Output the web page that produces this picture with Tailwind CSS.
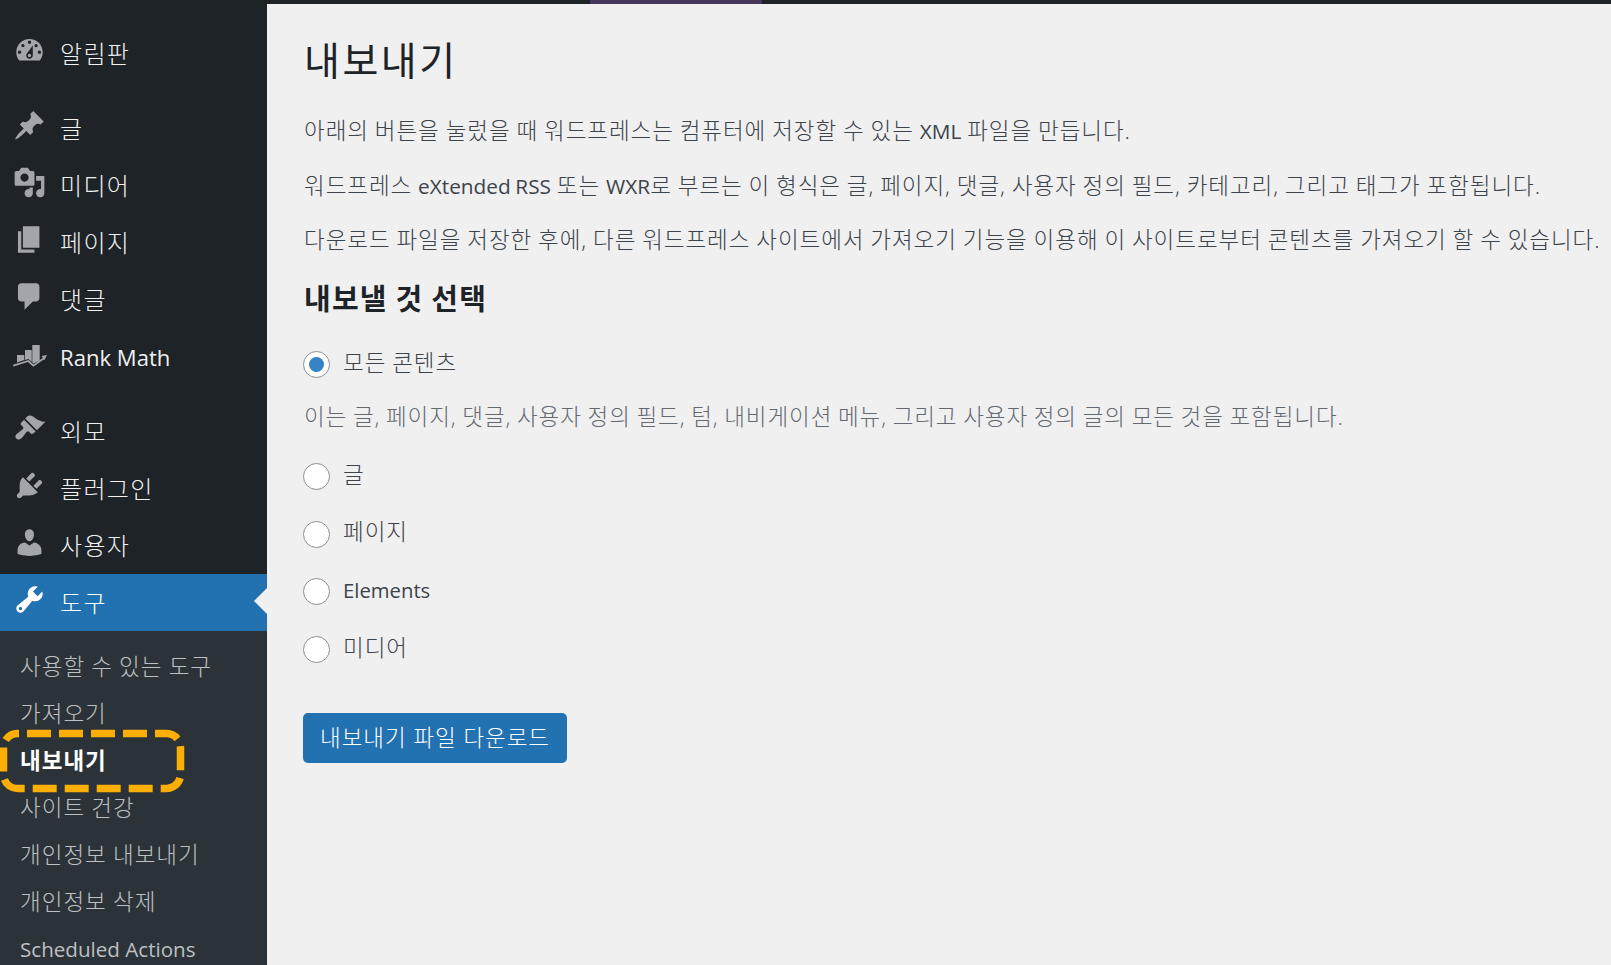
<!DOCTYPE html>
<html lang="ko">
<head>
<meta charset="UTF-8">
<title>내보내기</title>
<script src="https://cdn.jsdelivr.net/npm/@tailwindcss/browser@4"></script>
</head>
<body class="h-screen overflow-hidden bg-[#f0f0f1] font-['Open_Sans','Noto_Sans_CJK_KR',sans-serif] text-[#3c434a]">
<div class="relative flex h-full flex-col">
	<!-- top bar -->
	<div class="flex h-[4px] shrink-0 bg-[#1d2327]">
		<div class="w-[590px]"></div>
		<div class="w-[172px] bg-[#46385a]"></div>
	</div>
	<div class="flex min-h-0 flex-1">
		<!-- sidebar -->
		<aside class="flex w-[267px] shrink-0 flex-col bg-[#1d2327] pt-[21px] text-[24px] font-light tracking-[1.3px] text-[#f0f0f1]">
			<a class="flex h-[57px] shrink-0 items-center">
				<svg class="ml-[13px] h-[33px] w-[33px] -translate-y-[3px] fill-[#a2a6aa]" viewBox="0 0 20 20"><path d="M3.76 16h12.48c1.1-1.37 1.76-3.11 1.76-5 0-4.42-3.58-8-8-8s-8 3.58-8 8c0 1.89.66 3.63 1.76 5zM10 4c.55 0 1 .45 1 1s-.45 1-1 1-1-.45-1-1 .45-1 1-1zM6 6c.55 0 1 .45 1 1s-.45 1-1 1-1-.45-1-1 .45-1 1-1zm8 0c.55 0 1 .45 1 1s-.45 1-1 1-1-.45-1-1 .45-1 1-1zm-5.37 5.55L12 7v6c0 1.1-.9 2-2 2s-2-.9-2-2c0-.57.24-1.08.63-1.45zM4 10c.55 0 1 .45 1 1s-.45 1-1 1-1-.45-1-1 .45-1 1-1zm12 0c.55 0 1 .45 1 1s-.45 1-1 1-1-.45-1-1 .45-1 1-1zm-5 3c0-.55-.45-1-1-1s-1 .45-1 1 .45 1 1 1 1-.45 1-1z" fill-rule="evenodd"/></svg>
				<span class="ml-[14px]">알림판</span>
			</a>
			<a class="mt-[18px] flex h-[57px] shrink-0 items-center">
				<svg class="ml-[13px] h-[33px] w-[33px] -translate-y-[3px] fill-[#a2a6aa]" viewBox="0 0 20 20"><path d="M10.44 3.02l1.82-1.82 6.36 6.35-1.83 1.82c-1.05-.68-2.48-.57-3.41.36l-.75.75c-.92.93-1.04 2.35-.35 3.41l-1.83 1.82-2.41-2.41-2.8 2.79c-.42.42-3.38 2.71-3.8 2.29s1.86-3.39 2.28-3.81l2.79-2.79L4.1 9.36l1.83-1.82c1.05.69 2.48.57 3.4-.36l.75-.75c.93-.92 1.05-2.35.36-3.41z"/></svg>
				<span class="ml-[14px]">글</span>
			</a>
			<a class="flex h-[57px] shrink-0 items-center">
				<svg class="ml-[13px] h-[33px] w-[33px] -translate-y-[3px] fill-[#a2a6aa]" viewBox="0 0 20 20"><path d="M13 11V4c0-.55-.45-1-1-1h-1.67L9 1H5L3.67 3H2c-.55 0-1 .45-1 1v7c0 .55.45 1 1 1h10c.55 0 1-.45 1-1zM7 4.5c1.38 0 2.5 1.12 2.5 2.5S8.38 9.5 7 9.5 4.5 8.38 4.5 7 5.62 4.5 7 4.5zM14 6h5v10.5c0 1.38-1.12 2.5-2.5 2.5S14 17.88 14 16.5s1.12-2.5 2.5-2.5c.17 0 .34.02.5.05V9h-3V6zm-4 8.05V13h2v3.5c0 1.38-1.12 2.5-2.5 2.5S7 17.88 7 16.5 8.12 14 9.5 14c.17 0 .34.02.5.05z" fill-rule="evenodd"/></svg>
				<span class="ml-[14px]">미디어</span>
			</a>
			<a class="flex h-[57px] shrink-0 items-center">
				<svg class="ml-[13px] h-[33px] w-[33px] -translate-y-[3px] fill-[#a2a6aa]" viewBox="0 0 20 20"><path d="M6 15V2h10v13H6zm-1 1h8v2H3V5h2v11z"/></svg>
				<span class="ml-[14px]">페이지</span>
			</a>
			<a class="flex h-[57px] shrink-0 items-center">
				<svg class="ml-[13px] h-[33px] w-[33px] -translate-y-[3px] fill-[#a2a6aa]" viewBox="0 0 20 20"><path d="M5 2h9c1.1 0 2 .9 2 2v7c0 1.1-.9 2-2 2h-2l-5 5v-5H5c-1.1 0-2-.9-2-2V4c0-1.1.9-2 2-2z"/></svg>
				<span class="ml-[14px]">댓글</span>
			</a>
			<a class="flex h-[57px] shrink-0 items-center">
				<svg class="ml-[13px] h-[33px] w-[33px] overflow-visible fill-[#a2a6aa]" viewBox="0 0 33 33"><path d="M4 15h7.300v5l-7.300 2.500zM12 10h6.700v12l-3.400-3-3.300 1zM19.300 5h7.400v15.500l-6.400 3-1-.9z"/><path d="M.3 25.700l15-4.700 5 4.700 11.400-8" fill="none" stroke="#a2a6aa" stroke-width="1.800"/><path d="M34 15l-5.500 1 3 4z"/></svg>
				<span class="ml-[14px] translate-y-px text-[22.1px] font-normal tracking-normal">Rank Math</span>
			</a>
			<a class="mt-[18px] flex h-[57px] shrink-0 items-center">
				<svg class="ml-[13px] h-[33px] w-[33px] -translate-y-[3px] fill-[#a2a6aa]" viewBox="0 0 20 20"><path d="M14.48 11.06L7.41 3.99l1.5-1.5c.5-.56 2.3-.47 3.51.32 1.21.8 1.43 1.28 2.91 2.1 1.18.64 2.45 1.26 4.45.85zm-.71.71L6.7 4.7 4.93 6.47c-.39.39-.39 1.02 0 1.41l1.06 1.06c.39.39.39 1.03 0 1.42-.6.6-1.43 1.11-2.21 1.69-.35.26-.7.53-1.01.84C1.43 13.71.96 15.12 1.97 16.13c.99 1 2.4.53 3.8-.86.31-.31.58-.66.84-1.02.57-.78 1.08-1.61 1.69-2.21.39-.39 1.02-.39 1.41 0l1.06 1.06c.39.39 1.02.39 1.41 0z"/></svg>
				<span class="ml-[14px]">외모</span>
			</a>
			<a class="flex h-[57px] shrink-0 items-center">
				<svg class="ml-[13px] h-[33px] w-[33px] -translate-y-[3px] fill-[#a2a6aa]" viewBox="0 0 20 20"><path d="M13.11 4.36L9.87 7.6 8 5.73l3.24-3.24c.35-.34 1.05-.2 1.56.32.52.51.66 1.21.31 1.55zm-8 1.77l.91-1.12 9.01 9.01-1.19.84c-.71.71-2.63 1.16-3.82 1.16H6.14L4.9 17.26c-.59.59-1.54.59-2.12 0-.59-.58-.59-1.53 0-2.12l1.24-1.24v-3.88c0-1.13.4-3.19 1.09-3.89zm7.26 3.97l3.24-3.24c.34-.35 1.04-.21 1.55.31.52.51.66 1.21.31 1.55l-3.24 3.25z"/></svg>
				<span class="ml-[14px]">플러그인</span>
			</a>
			<a class="flex h-[57px] shrink-0 items-center">
				<svg class="ml-[13px] h-[33px] w-[33px] -translate-y-[3px] fill-[#a2a6aa]" viewBox="0 0 20 20"><path d="M10 9.25c-2.27 0-2.73-3.44-2.73-3.44C7 4.02 7.82 2 9.97 2c2.16 0 2.98 2.02 2.71 3.81 0 0-.41 3.44-2.68 3.44zm0 2.57L12.72 10c2.39 0 4.52 2.33 4.52 4.53v2.49s-3.65 1.13-7.24 1.13c-3.65 0-7.24-1.13-7.24-1.13v-2.49c0-2.25 1.94-4.48 4.47-4.48z"/></svg>
				<span class="ml-[14px]">사용자</span>
			</a>
			<a class="relative flex h-[57px] shrink-0 items-center bg-[#2271b1] text-white">
				<svg class="ml-[13px] h-[33px] w-[33px] -translate-y-[3px] fill-white" viewBox="0 0 20 20"><path d="M16.68 9.77c-1.34 1.34-3.3 1.67-4.95.99l-5.41 6.52c-.99.99-2.59.99-3.58 0s-.99-2.59 0-3.57l6.52-5.42c-.68-1.65-.35-3.61.99-4.95 1.28-1.28 3.12-1.62 4.72-1.06l-2.89 2.89 2.82 2.82 2.86-2.87c.53 1.58.18 3.39-1.08 4.65zM3.81 16.21c.4.39 1.04.39 1.43 0 .4-.4.4-1.04 0-1.43-.39-.4-1.03-.4-1.43 0-.39.39-.39 1.03 0 1.43z" fill-rule="evenodd"/></svg>
				<span class="ml-[14px]">도구</span>
				<span class="absolute right-0 top-[14px] h-0 w-0 border-y-[13px] border-r-[13px] border-y-transparent border-r-[#f0f0f1]"></span>
			</a>
			<ul class="flex-1 bg-[#2c3338] pt-[12px] text-[22.5px] tracking-[1px] text-[#bcc0c4] [word-spacing:-0.7px]">
				<li class="flex h-[47px] shrink-0 items-center pl-[20px]">사용할 수 있는 도구</li>
				<li class="flex h-[47px] shrink-0 items-center pl-[20px]">가져오기</li>
				<li class="flex h-[47px] shrink-0 items-center pl-[20px] font-semibold text-white">내보내기</li>
				<li class="flex h-[47px] shrink-0 items-center pl-[20px]">사이트 건강</li>
				<li class="flex h-[47px] shrink-0 items-center pl-[20px]">개인정보 내보내기</li>
				<li class="flex h-[47px] shrink-0 items-center pl-[20px]">개인정보 삭제</li>
				<li class="flex h-[47px] shrink-0 translate-y-px items-center pl-[20px] text-[20.6px] font-normal tracking-normal [word-spacing:0]">Scheduled Actions</li>
			</ul>
		</aside>
		<!-- content -->
		<main class="min-w-0 flex-1 whitespace-nowrap pl-[37px] text-[22.5px] font-light tracking-[0.93px] [word-spacing:-0.85px]">
			<h1 class="mt-[32px] text-[39px] font-normal leading-[48px] tracking-[2.5px] text-[#1d2327]">내보내기</h1>
			<p class="mt-[29px] leading-[36px]">아래의 버튼을 눌렀을 때 워드프레스는 컴퓨터에 저장할 수 있는 <span class="text-[20.8px] font-normal tracking-normal">XML</span> 파일을 만듭니다.</p>
			<p class="mt-[19px] leading-[36px]">워드프레스 <span class="text-[20.8px] font-normal tracking-normal">eXtended RSS</span> 또는 <span class="text-[20.8px] font-normal tracking-normal">WXR</span>로 부르는 이 형식은 글, 페이지, 댓글, 사용자 정의 필드, 카테고리, 그리고 태그가 포함됩니다.</p>
			<p class="mt-[18px] leading-[36px]">다운로드 파일을 저장한 후에, 다른 워드프레스 사이트에서 가져오기 기능을 이용해 이 사이트로부터 콘텐츠를 가져오기 할 수 있습니다.</p>
			<h2 class="mt-[21px] text-[29px] font-semibold leading-[40px] tracking-[1.2px] text-[#1d2327]">내보낼 것 선택</h2>
			<label class="mt-[32px] -ml-px flex h-[27px] items-center">
				<span class="flex h-[27px] w-[27px] items-center justify-center rounded-full border border-[#8c8f94] bg-white"><span class="h-[15px] w-[15px] rounded-full bg-[#3582c4]"></span></span>
				<span class="ml-[13px] -translate-y-[2px]">모든 콘텐츠</span>
			</label>
			<p class="mt-[21px] leading-[36px] tracking-[0.9px] text-[#646970] [word-spacing:-1px]">이는 글, 페이지, 댓글, 사용자 정의 필드, 텀, 내비게이션 메뉴, 그리고 사용자 정의 글의 모든 것을 포함됩니다.</p>
			<label class="mt-[28px] -ml-px flex h-[27px] items-center">
				<span class="h-[27px] w-[27px] rounded-full border border-[#8c8f94] bg-white"></span>
				<span class="ml-[13px] -translate-y-[2px]">글</span>
			</label>
			<label class="mt-[30.5px] -ml-px flex h-[27px] items-center">
				<span class="h-[27px] w-[27px] rounded-full border border-[#8c8f94] bg-white"></span>
				<span class="ml-[13px] -translate-y-[2px]">페이지</span>
			</label>
			<label class="mt-[30.5px] -ml-px flex h-[27px] items-center">
				<span class="h-[27px] w-[27px] rounded-full border border-[#8c8f94] bg-white"></span>
				<span class="ml-[13px] -translate-y-px text-[20.3px] font-normal tracking-normal">Elements</span>
			</label>
			<label class="mt-[30.5px] -ml-px flex h-[27px] items-center">
				<span class="h-[27px] w-[27px] rounded-full border border-[#8c8f94] bg-white"></span>
				<span class="ml-[13px] -translate-y-[1px]">미디어</span>
			</label>
			<button class="mt-[50.5px] -ml-px flex h-[50px] w-[264px] items-center justify-center rounded-[5px] bg-[#2271b1] text-white">내보내기 파일 다운로드</button>
		</main>
	</div>
	<!-- dashed highlight drawn over the menu -->
	<svg class="absolute left-0 top-[726px] h-[70px] w-[190px]" viewBox="0 0 190 70" fill="none"><rect x="3.500" y="7.500" width="177" height="55" rx="14" stroke="#fcae04" stroke-width="7.500" stroke-dasharray="24 8" stroke-dashoffset="-9.500"/></svg>
</div>
</body>
</html>
